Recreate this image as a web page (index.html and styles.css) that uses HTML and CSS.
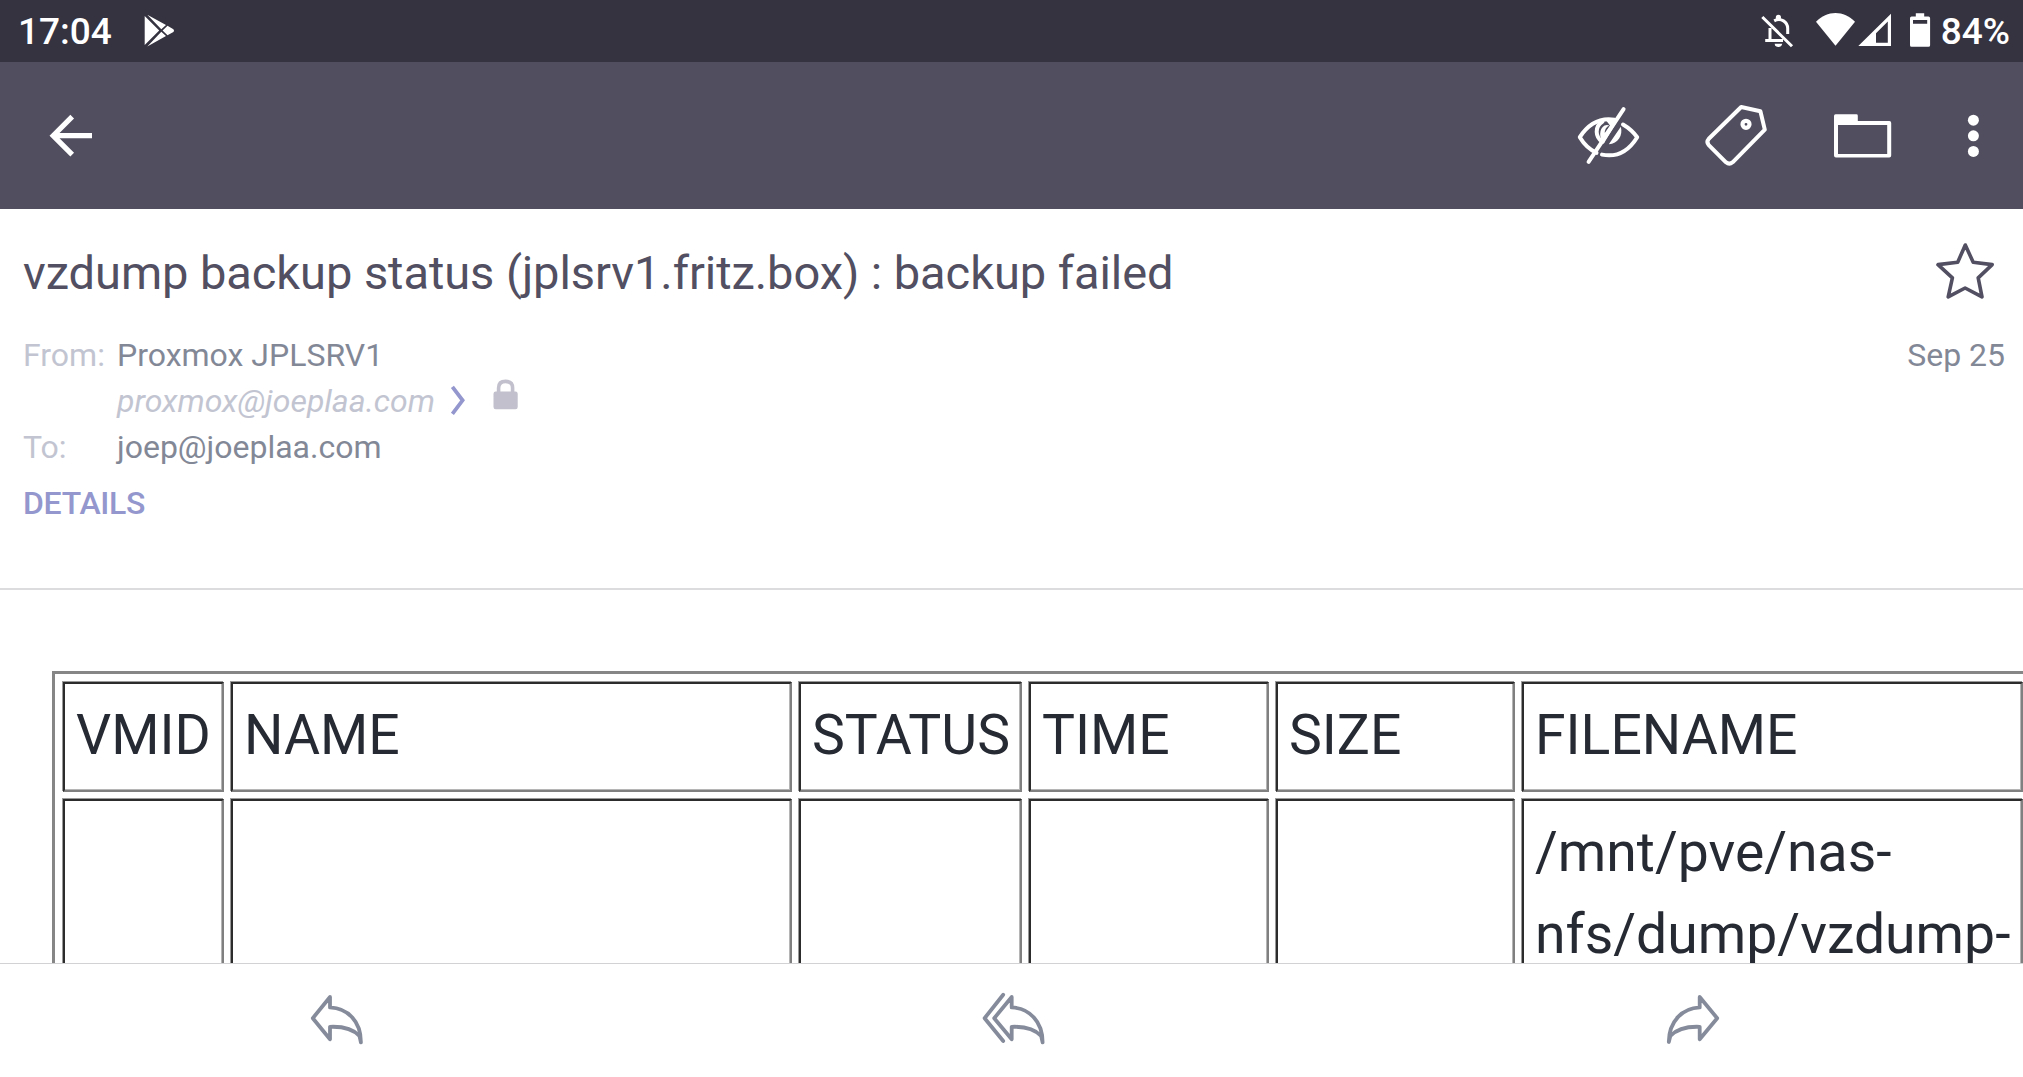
FILE: index.html
```
<!DOCTYPE html>
<html lang="en">
<head>
<meta charset="utf-8">
<title>vzdump backup status</title>
<link rel="stylesheet" href="styles.css">
</head>
<body>
<div class="status-bar">
  <span class="clock">17:04</span>
  <svg class="icon play" width="32" height="36" viewBox="144 12 32 36"><path class="solid" d="M144.7 16L159.2 30.5 144.7 45zM147.3 14.7L166 25 161.3 29.2zM147.3 46.5L166 36 161.3 31.8zM167.5 25.7L173.4 29.2Q174.8 30.6 173.4 32L167.5 35.3 162.6 30.5z"/></svg>
  <div class="status-right">
    <svg class="icon bell" width="36" height="36" viewBox="1760 12 36 36"><path class="thin" d="M1770 28V40.5M1765.2 40.5H1783M1774.2 20.8C1781 17.2 1787.7 22 1787.7 28.5V34M1762.3 17L1792 46.3"/><circle class="solid" cx="1778.4" cy="17.4" r="2.6"/><path class="solid" d="M1774.6 43.7H1782.2Q1781.5 47 1778.4 47T1774.6 43.7z"/></svg>
    <svg class="icon wifi" width="40" height="36" viewBox="1816 12 40 36"><path class="solid" d="M1816 21.8C1827 10.2 1844 10.2 1855 21.8L1835.5 45.8z"/></svg>
    <svg class="icon signal" width="34" height="36" viewBox="1858 12 34 36"><path class="solid" fill-rule="evenodd" d="M1858.3 46H1891V13.7zM1876 42.7H1887.8V21.4L1876 33.2z"/></svg>
    <svg class="icon battery" width="22" height="36" viewBox="1909 12 22 36"><path class="solid" fill-rule="evenodd" d="M1915.8 13.2H1924.2V16.6H1928.5Q1930.1 16.6 1930.1 18.2V45.2Q1930.1 46.8 1928.5 46.8H1911.6Q1910 46.8 1910 45.2V18.2Q1910 16.6 1911.6 16.6H1915.8zM1913 20V23.8H1927.2V20z"/></svg>
    <span class="percent">84%</span>
  </div>
</div>

<div class="app-bar">
  <svg class="icon" width="46" height="46" viewBox="48 113 46 46"><path class="back" d="M92 135.7H54M72.2 116.7L53.2 135.7 72.2 154.7"/></svg>
  <div class="actions">
    <svg class="icon" width="66" height="62" viewBox="1576 105 66 62"><path class="line" d="M1596.5 152.8C1590.5 150 1584.5 145 1579.8 137.2C1589 123 1601 117.6 1614.5 119.8M1623 124.5C1629 128 1633.5 132.2 1637.2 137.2C1628 152 1615.5 157.4 1602 154.6"/><path class="line" d="M1602.5 142C1595 137 1594.5 126.5 1602.5 121.5"/><path class="solid" d="M1605 119H1618.5L1604 143.3C1598.5 138.5 1599.2 128.5 1604.5 125.6Q1607 124.4 1609.3 125.6Q1604.6 128 1604.8 133L1610 125.5zM1620.8 126.8C1623.2 135.5 1618 143.8 1608.8 144.2z"/><path class="line" d="M1623.6 109.2L1588.6 161.8"/></svg>
    <svg class="icon tag" width="66" height="66" viewBox="1703 102 66 66"><path class="line" d="M1741.2 106L1760.4 110.2 1764.8 128.6 1732.6 161.3Q1729.3 164 1726 161.3L1708.8 144.1Q1706 141 1708.8 137.8z"/><circle class="hole" cx="1746" cy="123.3" r="3.5"/></svg>
    <svg class="icon folder" width="60" height="48" viewBox="1833 111 60 48"><path class="solid" fill-rule="evenodd" d="M1835.6 113.3H1856.4Q1857.8 113.3 1857.8 114.7V120H1889.4Q1891.2 120 1891.2 122V154.5Q1891.2 156.5 1889.2 156.5H1836Q1834 156.5 1834 154.5V115Q1834 113.3 1835.6 113.3zM1838 124V153H1887.2V124z"/></svg>
    <svg class="icon more" width="14" height="46" viewBox="1966.4 112.6 14 46"><g class="solid"><circle cx="1973.8" cy="119.8" r="5.5"/><circle cx="1973.8" cy="135.4" r="5.5"/><circle cx="1973.8" cy="151" r="5.5"/></g></svg>
  </div>
</div>

<div class="header">
  <div class="subject-row">
    <h1 class="subject">vzdump backup status (jplsrv1.fritz.box) : backup failed</h1>
    <svg class="icon" width="62" height="60" viewBox="1934 241 62 60"><path class="star" d="M1965.3 245L1973.2 262.3 1992.2 264.6 1978.2 277.9 1982 296.9 1965.1 288 1948.2 296.9 1952.4 277.9 1938 264.6 1957.7 262.3z"/></svg>
  </div>
  <div class="meta">
    <span class="label">From:</span><span class="value">Proxmox JPLSRV1</span><span class="date">Sep 25</span>
    <span class="label"></span>
    <span class="sender"><em class="address">proxmox@joeplaa.com</em>
      <svg class="icon chevron" width="16" height="32" viewBox="451 383 16 32"><path class="chev" d="M453.4 385.8L463.6 399.3 453.4 412.8"/></svg>
      <svg class="icon lock" width="26" height="32" viewBox="493 379 26 32"><rect class="lock-body" x="493.5" y="391.6" width="24.2" height="17.6" rx="2.2"/><path class="shackle" d="M498.6 393V388Q498.6 381.4 505.6 381.4T512.6 388V393"/></svg>
    </span><span></span>
    <span class="label">To:</span><span class="value">joep@joeplaa.com</span><span></span>
  </div>
  <a class="details">DETAILS</a>
</div>

<div class="message">
  <table class="report">
    <colgroup><col class="c-id"><col class="c-name"><col class="c-status"><col class="c-time"><col class="c-size"><col class="c-file"></colgroup>
    <tr><td>VMID</td><td>NAME</td><td>STATUS</td><td>TIME</td><td>SIZE</td><td>FILENAME</td></tr>
    <tr class="entry"><td></td><td></td><td></td><td></td><td></td><td>/mnt/pve/nas-<br>nfs/dump/vzdump-</td></tr>
  </table>
</div>

<div class="reply-bar">
  <svg class="icon reply" width="60" height="56" viewBox="307 991 60 56"><path class="arrow" d="M330 997L312.8 1018.2 330 1039.2V1026.8C343 1026.3 353 1028.8 359.5 1036L360.9 1042.4C361 1021 347.5 1008.2 330 1007.4z"/></svg>
  <svg class="icon reply-all" width="66" height="56" viewBox="981 991 66 56"><path class="arrow" d="M1003.2 994.8L984.6 1018.2 1003.2 1041M1011.7 997L994.2 1018.2 1011.7 1039.2V1026.8C1024.5 1026.3 1034.5 1028.8 1041.2 1036L1042.6 1042.4C1042.6 1021 1029 1008.2 1011.7 1007.4z"/></svg>
  <svg class="icon forward" width="60" height="56" viewBox="1664 991 60 56"><path class="arrow" d="M1699.7 997L1717.2 1018.2 1699.7 1039.2V1026.8C1687 1026.3 1677 1028.8 1670.3 1036L1668.8 1042C1669 1021 1682.5 1008.2 1699.7 1007.4z"/></svg>
</div>
</body>
</html>
```
FILE: styles.css
```
* { box-sizing: border-box; }

body {
  margin: 0;
  width: 2023px;
  height: 1077px;
  overflow: hidden;
  display: flex;
  flex-direction: column;
  background: #fff;
  font-family: Roboto, "Liberation Sans", sans-serif;
}

.icon { display: block; flex: none; fill: none; }
.solid { fill: #fff; }
.thin { stroke: #fff; stroke-width: 3; }
.line { stroke: #fff; stroke-width: 4; stroke-linecap: round; stroke-linejoin: round; }
.hole { stroke: #fff; stroke-width: 4.2; }
.back { stroke: #fff; stroke-width: 5.2; }

.status-bar {
  flex: none;
  height: 62px;
  display: flex;
  align-items: center;
  padding: 0 13px 0 18px;
  background: #353340;
  color: #fff;
  font-size: 37px;
  line-height: 62px;
  font-weight: 500;
}
.clock, .percent { padding-top: 2px; }
.play { margin: -2px 0 0 32px; }
.status-right { margin-left: auto; display: flex; align-items: center; }
.status-right .icon { margin-top: -2px; }
.wifi { margin-left: 20px; }
.signal { margin-left: 2px; }
.battery { margin-left: 17px; }
.percent { margin-left: 10px; }

.app-bar {
  flex: none;
  height: 147px;
  display: flex;
  align-items: center;
  justify-content: space-between;
  padding: 0 43px 0 48px;
  background: #514f5f;
}
.actions { display: flex; align-items: center; }
.tag { margin-left: 61px; }
.folder { margin-left: 64px; }
.more { margin-left: 73px; }

.header {
  flex: none;
  height: 381px;
  padding: 32px 18px 0 23px;
  border-bottom: 2px solid #dcdcde;
}
.subject-row {
  display: flex;
  justify-content: space-between;
  padding-right: 9px;
}
.subject {
  margin: 0;
  font-size: 47px;
  line-height: 64px;
  font-weight: 400;
  letter-spacing: -0.06px;
  color: #514f61;
}
.star { stroke: #514f61; stroke-width: 3.6; stroke-linejoin: round; }

.meta {
  margin-top: 27px;
  display: grid;
  grid-template-columns: 94px 1fr auto;
  grid-auto-rows: 46px;
  font-size: 32px;
  line-height: 46px;
}
.label { color: #c2c5d1; }
.value, .date { color: #838897; }
.sender { display: flex; align-items: center; }
.address { color: #c2c5d1; }
.chevron { margin: -2px 0 0 15px; }
.chev { stroke: #9397cd; stroke-width: 3.8; }
.lock { margin: -12px 0 0 27px; }
.lock-body { fill: #c1c0cc; }
.shackle { stroke: #c1c0cc; stroke-width: 3.6; }
.details {
  display: block;
  margin-top: 10px;
  font-size: 32px;
  line-height: 46px;
  font-weight: 500;
  letter-spacing: -0.3px;
  color: #9397cd;
}

.message {
  flex: 1;
  min-height: 0;
  overflow: hidden;
  padding: 81px 0 0 52px;
}
.report {
  width: 1981px;
  table-layout: fixed;
  border-collapse: separate;
  border-spacing: 7px;
  border: 3px solid #868686;
  padding: 1px;
  font-size: 55.3px;
  line-height: 82.4px;
  color: #262a33;
}
.report td {
  height: 110px;
  padding: 11px 0 0 11px;
  vertical-align: top;
  white-space: nowrap;
  border: 2px solid;
  border-color: #2c2c2c #808080 #808080 #2c2c2c;
  box-shadow: -1px -1px 0 #999, inset -1px -1px 0 #b5b5b5;
}
.report .entry td { height: 360px; }
.c-id { width: 161px; }
.c-name { width: 561px; }
.c-status { width: 223px; }
.c-time { width: 240px; }
.c-size { width: 239px; }
.c-file { width: 501px; }

.reply-bar {
  flex: none;
  height: 114px;
  display: flex;
  align-items: flex-start;
  padding: 27px 299px 0 307px;
  border-top: 1px solid #d2d2d4;
}
.reply-all { margin-left: 614px; }
.forward { margin-left: 617px; }
.arrow { stroke: #858b9a; stroke-width: 3.8; stroke-linecap: round; stroke-linejoin: round; }
```
